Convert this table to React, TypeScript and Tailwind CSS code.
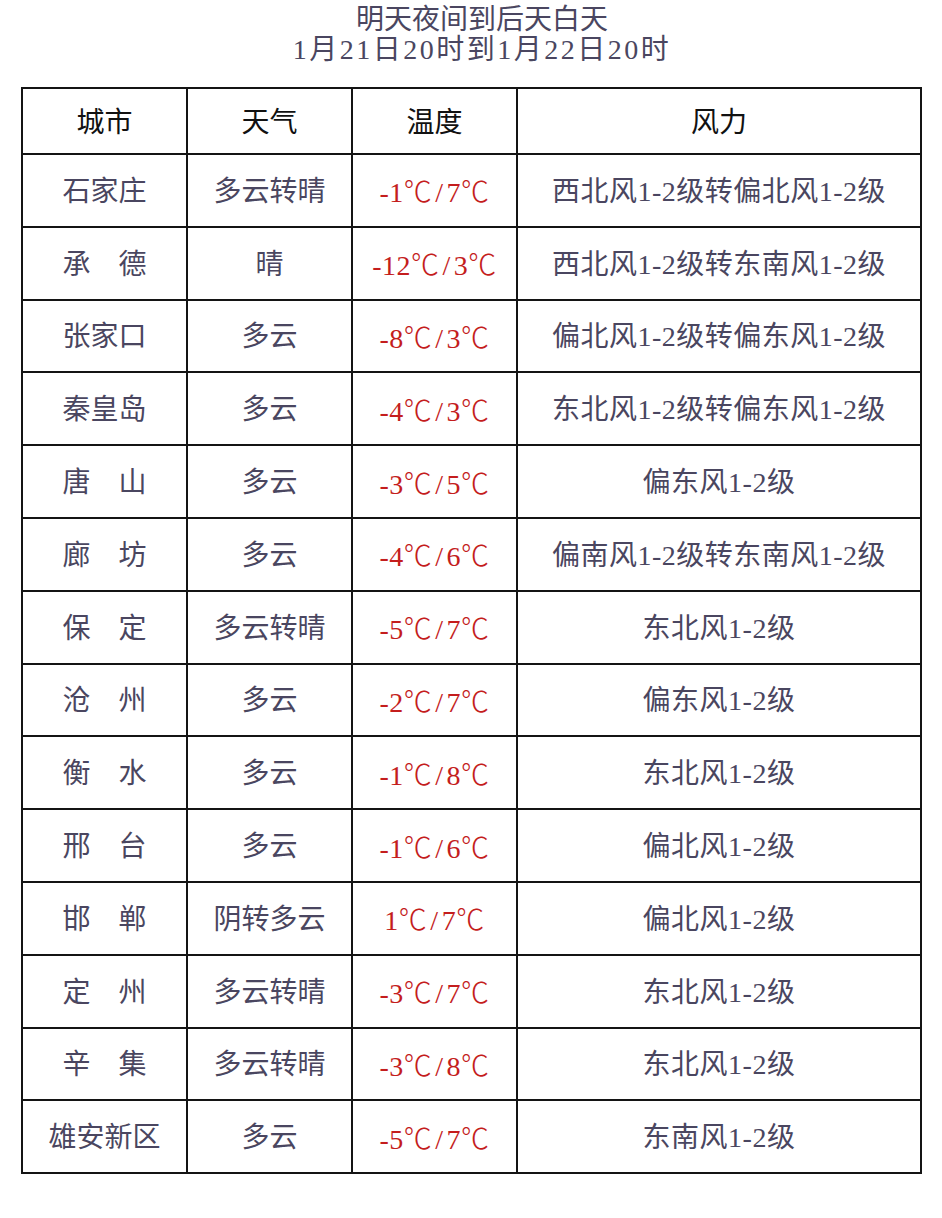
const rows: [string, string, string, string][] = [
  ["石家庄", "多云转晴", "-1℃/7℃", "西北风1-2级转偏北风1-2级"],
  ["承　德", "晴", "-12℃/3℃", "西北风1-2级转东南风1-2级"],
  ["张家口", "多云", "-8℃/3℃", "偏北风1-2级转偏东风1-2级"],
  ["秦皇岛", "多云", "-4℃/3℃", "东北风1-2级转偏东风1-2级"],
  ["唐　山", "多云", "-3℃/5℃", "偏东风1-2级"],
  ["廊　坊", "多云", "-4℃/6℃", "偏南风1-2级转东南风1-2级"],
  ["保　定", "多云转晴", "-5℃/7℃", "东北风1-2级"],
  ["沧　州", "多云", "-2℃/7℃", "偏东风1-2级"],
  ["衡　水", "多云", "-1℃/8℃", "东北风1-2级"],
  ["邢　台", "多云", "-1℃/6℃", "偏北风1-2级"],
  ["邯　郸", "阴转多云", "1℃/7℃", "偏北风1-2级"],
  ["定　州", "多云转晴", "-3℃/7℃", "东北风1-2级"],
  ["辛　集", "多云转晴", "-3℃/8℃", "东北风1-2级"],
  ["雄安新区", "多云", "-5℃/7℃", "东南风1-2级"],
];

const cell = "border-2 border-[#141414] text-center align-middle p-0";

// ℃ is drawn from the CJK font so it keeps its full width
function Temp({ value }: { value: string }) {
  const [low, high] = value.split("/");
  const part = (t: string) => (
    <>
      {t.replace("℃", "")}
      <span className="font-['Noto_Sans_CJK_SC',sans-serif] font-light">℃</span>
    </>
  );
  return (
    <span className="tracking-[0.5px]">
      {part(low)}
      <span className="px-[3px]">/</span>
      {part(high)}
    </span>
  );
}

export default function App() {
  return (
    <div className="min-h-[1218px] w-[942px] bg-white font-['Liberation_Serif','Noto_Sans_CJK_SC',serif] text-[28px] text-[#4a4660]">
      {/* Title */}
      <div className="pt-[5px] text-center leading-[30px]">
        <div className="pl-[22px]">明天夜间到后天白天</div>
        <div className="pl-[22px] tracking-[2.5px]">1月21日20时到1月22日20时</div>
      </div>

      {/* Table */}
      <div className="mt-[22px] px-[21px]">
        <table className="w-[901px] border-collapse table-fixed">
          <colgroup>
            <col className="w-[165px]" />
            <col className="w-[165px]" />
            <col className="w-[165px]" />
            <col />
          </colgroup>
          <thead>
            <tr className="h-[66px] text-[#111]">
              <th className={`${cell} font-normal pt-[4px]`}>城市</th>
              <th className={`${cell} font-normal pt-[4px]`}>天气</th>
              <th className={`${cell} font-normal pt-[4px]`}>温度</th>
              <th className={`${cell} font-normal pt-[4px]`}>风力</th>
            </tr>
          </thead>
          <tbody>
            {rows.map(([city, weather, temp, wind]) => (
              <tr key={city} className="h-[72.8px]">
                <td className={`${cell} pt-[3px]`}>{city}</td>
                <td className={`${cell} pt-[3px]`}>{weather}</td>
                <td className={`${cell} pt-[3px] text-[#c41d1d]`}>
                  <Temp value={temp} />
                </td>
                <td className={`${cell} pt-[3px] tracking-[0.5px]`}>{wind}</td>
              </tr>
            ))}
          </tbody>
        </table>
      </div>
    </div>
  );
}
